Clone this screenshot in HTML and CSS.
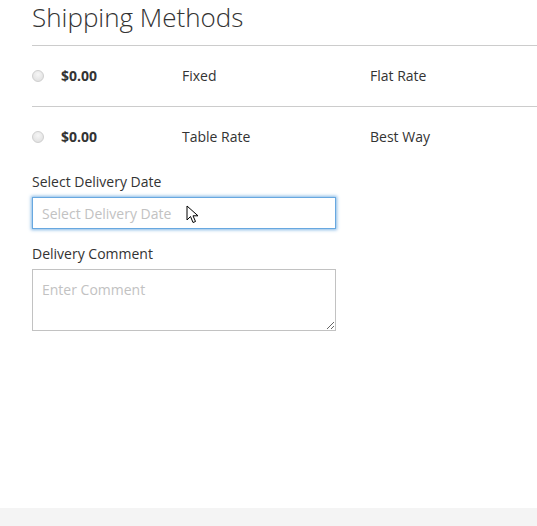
FILE: index.html
```html
<!DOCTYPE html>
<html>
<head>
<meta charset="utf-8">
<link rel="stylesheet" href="styles.css">
</head>
<body>
<div class="page">
  <div class="content">
    <h2 class="title">Shipping Methods</h2>
    <div class="methods">
      <div class="row">
        <span class="radio"></span>
        <span class="price">$0.00</span>
        <span class="method">Fixed</span>
        <span class="carrier">Flat Rate</span>
      </div>
      <div class="row last">
        <span class="radio"></span>
        <span class="price">$0.00</span>
        <span class="method">Table Rate</span>
        <span class="carrier">Best Way</span>
      </div>
    </div>
    <div class="field">
      <label class="label">Select Delivery Date</label>
      <div class="input-wrap">
        <input class="input" type="text" placeholder="Select Delivery Date">
        <svg class="cursor" width="14" height="20" viewBox="0 0 14 20">
          <path d="M1 1 L1 15 L4.5 11.5 L7 17.5 L9.5 16.5 L7 10.8 L12 10.8 Z" fill="#fff" stroke="#000" stroke-width="1" stroke-linejoin="miter"/>
        </svg>
      </div>
    </div>
    <div class="field second">
      <label class="label">Delivery Comment</label>
      <textarea class="textarea" placeholder="Enter Comment"></textarea>
    </div>
  </div>
  <div class="footer-band"></div>
</div>
</body>
</html>
```
FILE: styles.css
```css
html, body {
  margin: 0;
  padding: 0;
  background: #fff;
}
body {
  font-family: "Open Sans", "Liberation Sans", sans-serif;
  color: #333;
  font-size: 14px;
}
.page {
  height: 526px;
  display: flex;
  flex-direction: column;
}
.content {
  flex: 1;
  padding-left: 32px;
}
.title {
  margin: 0;
  padding: 0;
  font-size: 26px;
  font-weight: 300;
  line-height: 34px;
  color: #333;
  height: 46px;
  box-sizing: border-box;
  border-bottom: 1px solid #ccc;
}
.methods {
  display: flex;
  flex-direction: column;
}
.row {
  display: grid;
  grid-template-columns: 29px 121px 188px 1fr;
  align-items: center;
  height: 60px;
  border-bottom: 1px solid #ccc;
  line-height: 20px;
}
.row.last {
  border-bottom: none;
}
.radio {
  width: 12px;
  height: 12px;
  border-radius: 50%;
  box-sizing: border-box;
  border: 1px solid #cfcfcf;
  background: radial-gradient(circle at 50% 35%, #f6f6f6 0%, #e4e4e4 70%, #dadada 100%);
  margin-top: -1px;
}
.price {
  font-weight: 700;
}
.field {
  display: flex;
  flex-direction: column;
  margin-top: 5px;
  width: 304px;
}
.field.second {
  margin-top: 15px;
}
.label {
  line-height: 20px;
  margin-bottom: 5px;
}
.input-wrap {
  position: relative;
}
.input {
  display: block;
  width: 304px;
  height: 32px;
  box-sizing: border-box;
  border: 1px solid #68a8e0;
  box-shadow: 0 0 3px 1px rgba(104, 168, 224, 0.8);
  outline: none;
  padding: 0 9px;
  font-family: "Open Sans", "Liberation Sans", sans-serif;
  font-size: 14px;
  color: #333;
  background: #fff;
  margin: 0;
}
.input::placeholder,
.textarea::placeholder {
  color: #c2c2c2;
  opacity: 1;
}
.cursor {
  position: absolute;
  left: 154px;
  top: 8px;
}
.textarea {
  display: block;
  width: 304px;
  height: 62px;
  box-sizing: border-box;
  border: 1px solid #c2c2c2;
  padding: 10px 9px;
  font-family: "Open Sans", "Liberation Sans", sans-serif;
  font-size: 14px;
  line-height: 20px;
  color: #333;
  margin: 0;
  resize: vertical;
  outline: none;
}
.footer-band {
  height: 18px;
  background: #f4f4f4;
}
```
